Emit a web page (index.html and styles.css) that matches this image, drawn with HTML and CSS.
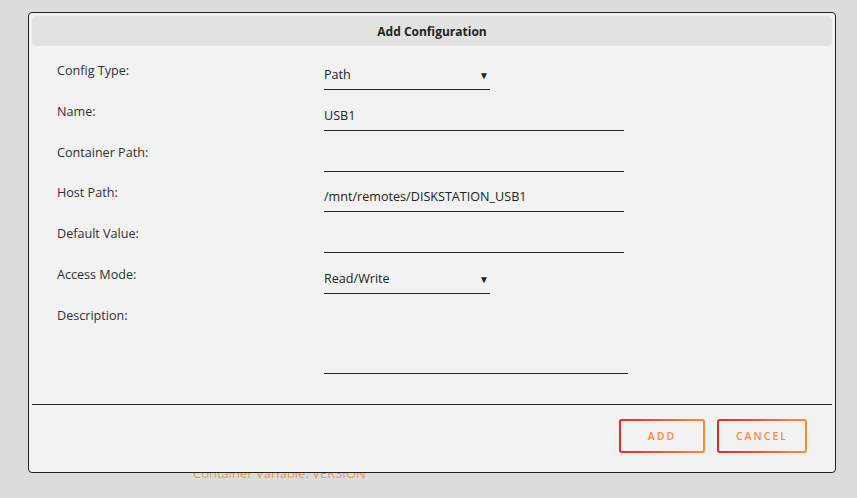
FILE: index.html
```html
<!DOCTYPE html>
<html lang="en">
<head>
    <meta charset="UTF-8">
    <title>Add Configuration</title>
    <link rel="stylesheet" href="styles.css">
</head>
<body>
    <div class="page">
        <div class="page-note">Container Variable: VERSION</div>
    </div>

    <div class="dialog">
        <div class="dialog-title">Add Configuration</div>

        <div class="form">
            <div class="row">
                <div class="label">Config Type:</div>
                <div class="field select">Path<span class="arrow">&#9660;</span></div>
            </div>
            <div class="row">
                <div class="label">Name:</div>
                <div class="field">USB1</div>
            </div>
            <div class="row">
                <div class="label">Container Path:</div>
                <div class="field"></div>
            </div>
            <div class="row">
                <div class="label">Host Path:</div>
                <div class="field">/mnt/remotes/DISKSTATION_USB1</div>
            </div>
            <div class="row">
                <div class="label">Default Value:</div>
                <div class="field"></div>
            </div>
            <div class="row">
                <div class="label">Access Mode:</div>
                <div class="field select">Read/Write<span class="arrow">&#9660;</span></div>
            </div>
            <div class="row row-tall">
                <div class="label">Description:</div>
                <div class="field textarea"></div>
            </div>
        </div>

        <div class="dialog-buttons">
            <button class="btn">ADD</button>
            <button class="btn">CANCEL</button>
        </div>
    </div>
</body>
</html>
```

FILE: styles.css
```css
* {
    box-sizing: border-box;
    margin: 0;
    padding: 0;
}

body {
    font-family: 'Open Sans', sans-serif;
    font-size: 12px;
    color: #303030;
    background-color: #dcdcdc;
    width: 857px;
    height: 498px;
    overflow: hidden;
}

.page {
    padding: 464px 0 0 193px;
}

.page-note {
    font-size: 13px;
    color: #e0a048;
}

/* modal overlay */
.dialog {
    position: absolute;
    left: 28px;
    top: 12px;
    width: 808px;
    height: 461px;
    background-color: #f2f2f2;
    border: 1px solid #222;
    border-radius: 4px;
    padding: 3px;
}

.dialog-title {
    height: 30px;
    line-height: 30px;
    padding-top: 1px;
    background-color: #e2e2e2;
    border-radius: 4px;
    text-align: center;
    font-weight: 700;
    color: #222;
}

.form {
    padding: 10px 0 0 25px;
    height: 359px;
    border-bottom: 1px solid #222;
    font-size: 12.6px;
}

.row {
    display: flex;
    height: 40.8px;
}

.row-tall {
    height: 80px;
}

.label {
    width: 267px;
    padding-top: 6px;
    line-height: 18px;
}

.field {
    position: relative;
    width: 300px;
    height: 29px;
    margin-top: 5px;
    line-height: 28px;
    border-bottom: 1px solid #222;
    color: #222;
}

.select {
    width: 166px;
}

.arrow {
    position: absolute;
    right: 1px;
    top: 0;
    font-size: 10px;
}

.textarea {
    width: 304px;
    height: 68px;
}

.dialog-buttons {
    display: flex;
    justify-content: flex-end;
    gap: 12px;
    padding: 14px 25px 0 0;
}

.btn {
    min-width: 86px;
    height: 34px;
    padding: 0 17px;
    font-family: 'Open Sans', sans-serif;
    font-size: 10.5px;
    font-weight: 600;
    letter-spacing: 2px;
    color: #ff8c2f;
    border: 2px solid transparent;
    border-radius: 3px;
    background: linear-gradient(#f2f2f2, #f2f2f2) padding-box,
                linear-gradient(90deg, #e22828, #ff8c2f) border-box;
    cursor: pointer;
}
```
